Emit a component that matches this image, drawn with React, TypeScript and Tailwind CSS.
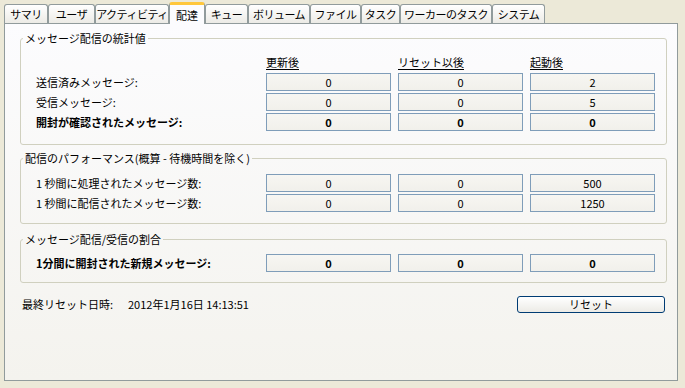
const tabs = [
  { label: 'サマリ', w: 'w-[44px]' },
  { label: 'ユーザ', w: 'w-[47px]' },
  { label: 'アクティビティ', w: 'w-[74px]' },
  { label: '配達', w: 'w-[36px]', active: true },
  { label: 'キュー', w: 'w-[43px]' },
  { label: 'ボリューム', w: 'w-[62px]' },
  { label: 'ファイル', w: 'w-[51px]' },
  { label: 'タスク', w: 'w-[39px]' },
  { label: 'ワーカーのタスク', w: 'w-[92px]' },
  { label: 'システム', w: 'w-[53px]' },
];

function Tab({ label, w, active }: { label: string; w: string; active?: boolean }) {
  if (active) {
    return (
      <div
        className={`${w} h-[22px] -mb-px flex items-center justify-center whitespace-nowrap rounded-t-[3px] border-x border-[#919B9C] border-t-[3px] border-t-[#FFC73C] bg-[#FCFCFE] text-[11px] leading-[14px] text-black relative z-10`}
      >
        {label}
      </div>
    );
  }
  return (
    <div
      className={`${w} h-[19px] flex items-center justify-center whitespace-nowrap overflow-hidden tracking-[-0.5px] rounded-t-[3px] border border-b-0 border-[#919B9C] bg-gradient-to-b from-white to-[#ECEBE6] text-[11px] leading-[14px] text-black`}
    >
      {label}
    </div>
  );
}

function Box({ value, bold }: { value: string; bold?: boolean }) {
  return (
    <div
      className={`w-[125px] h-[18px] flex items-center justify-center border border-[#7F9DB9] bg-gradient-to-b from-[#F7F6F2] to-[#F1F0EB] text-[11px] leading-[14px] ${bold ? 'font-bold' : ''}`}
    >
      {value}
    </div>
  );
}

function Row({ label, values, bold }: { label: string; values: string[]; bold?: boolean }) {
  return (
    <div className="flex items-center h-[18px]">
      <div className={`w-[230px] text-[11px] leading-[14px] ${bold ? 'font-bold' : ''}`}>{label}</div>
      <div className="flex gap-[7px]">
        {values.map((v, i) => (
          <Box key={i} value={v} bold={bold} />
        ))}
      </div>
    </div>
  );
}

function Group({ title, className, children }: { title: string; className: string; children: React.ReactNode }) {
  return (
    <fieldset className={`w-[647px] border border-[#D0D0BF] rounded-[3px] pl-[15px] ${className}`}>
      <legend className="-ml-[13px] px-[2px] text-[11px] leading-[14px] text-black">{title}</legend>
      {children}
    </fieldset>
  );
}

export default function App() {
  return (
    <div
      className="w-[685px] h-[388px] bg-[#ECE9D8] pl-[4px] pt-[2px] text-black"
      style={{ fontFamily: '"Noto Sans CJK JP", "Liberation Sans", sans-serif' }}
    >
      <div className="flex items-end h-[21px]">
        {tabs.map((t) => (
          <Tab key={t.label} {...t} />
        ))}
      </div>
      <div className="w-[674px] h-[358px] border border-[#919B9C] bg-gradient-to-b from-[#FCFCFE] to-[#F4F3EE] pl-[15px] pt-[7px]">
        <Group title="メッセージ配信の統計値" className="h-[114px] pt-[10px]">
          <div className="flex h-[16px] mb-[2px]">
            <div className="w-[230px]" />
            <div className="flex gap-[7px] text-[11px] leading-[14px]">
              <div className="w-[125px]"><span className="underline underline-offset-2">更新後</span></div>
              <div className="w-[125px]"><span className="underline underline-offset-2">リセット以後</span></div>
              <div className="w-[125px]"><span className="underline underline-offset-2">起動後</span></div>
            </div>
          </div>
          <div className="flex flex-col gap-[2px]">
            <Row label="送信済みメッセージ:" values={['0', '0', '2']} />
            <Row label="受信メッセージ:" values={['0', '0', '5']} />
            <Row label="開封が確認されたメッセージ:" values={['0', '0', '0']} bold />
          </div>
        </Group>
        <Group title="配信のパフォーマンス(概算 - 待機時間を除く)" className="h-[73px] mt-[6px] pt-[9px]">
          <div className="flex flex-col gap-[2px]">
            <Row label="1 秒間に処理されたメッセージ数:" values={['0', '0', '500']} />
            <Row label="1 秒間に配信されたメッセージ数:" values={['0', '0', '1250']} />
          </div>
        </Group>
        <Group title="メッセージ配信/受信の割合" className="h-[51px] mt-[8px] pt-[8px]">
          <Row label="1分間に開封された新規メッセージ:" values={['0', '0', '0']} bold />
        </Group>
        <div className="flex items-center h-[16px] mt-[13px] w-[647px] pl-[2px]">
          <div className="w-[106px] text-[11px] leading-[14px]">最終リセット日時:</div>
          <div className="flex-1 text-[11px] leading-[14px]">2012年1月16日 14:13:51</div>
          <button className="w-[148px] h-[17px] mr-[2px] rounded-[3px] border border-[#003C74] bg-gradient-to-b from-white to-[#ECEBE6] text-[11px] leading-[14px]">
            リセット
          </button>
        </div>
      </div>
    </div>
  );
}
